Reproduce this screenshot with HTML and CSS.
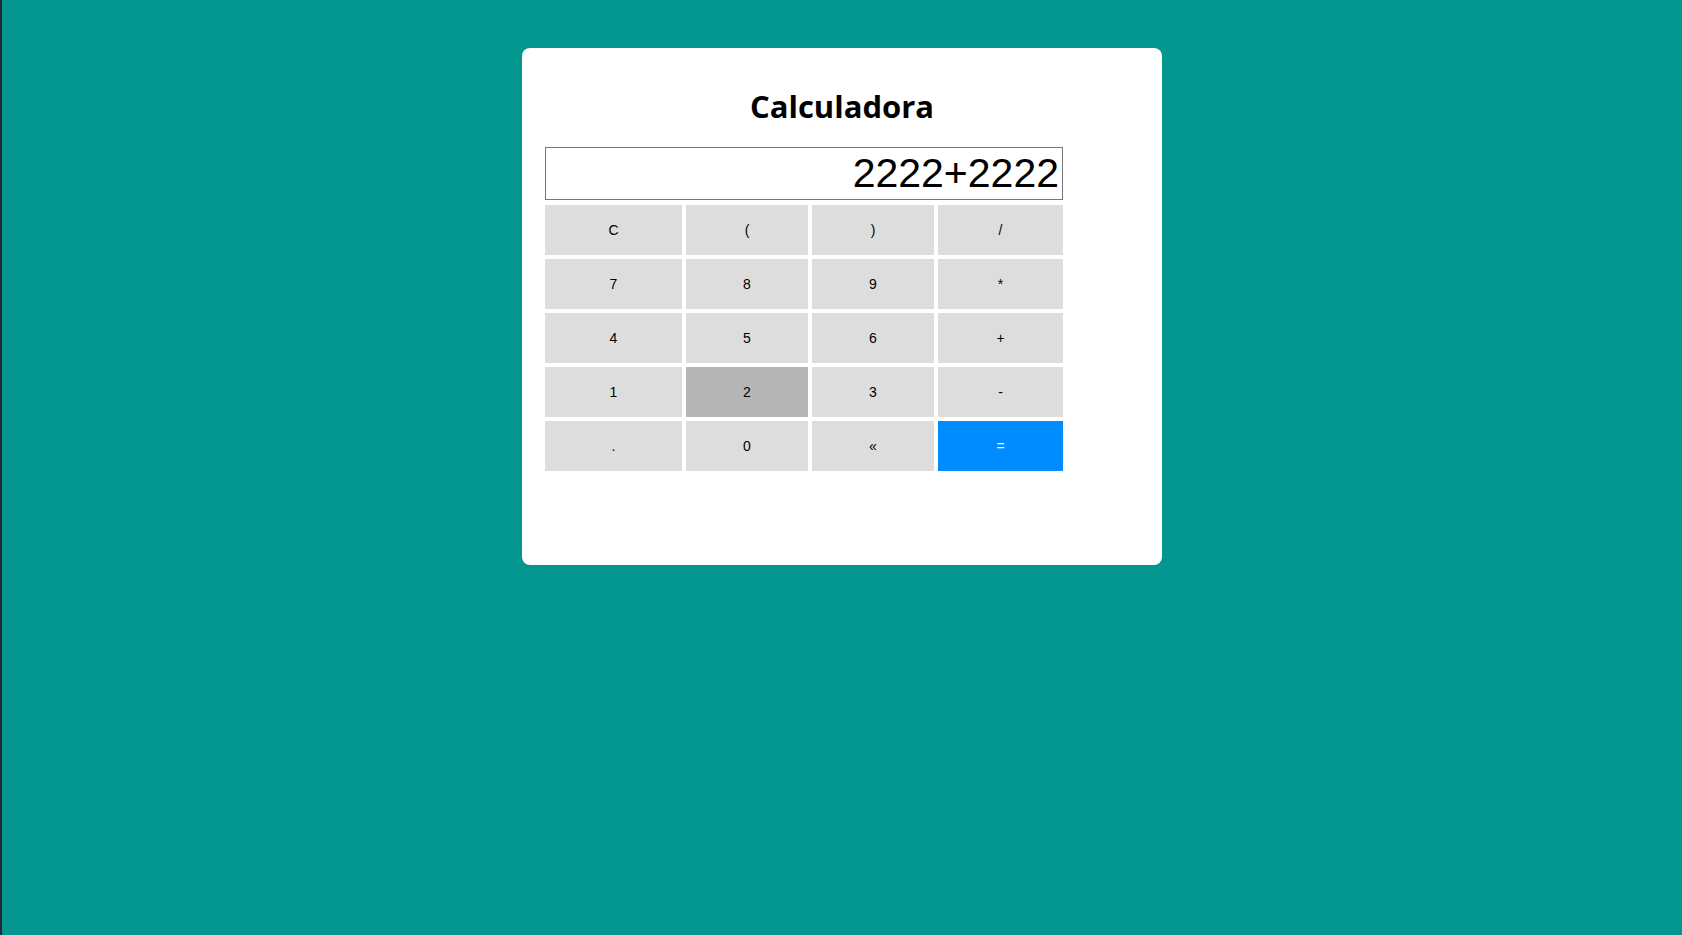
FILE: index.html
```html
<!DOCTYPE html>
<html lang="es">
<head>
<meta charset="utf-8">
<title>Calculadora</title>
<link rel="stylesheet" href="styles.css">
</head>
<body>
<div class="card">
  <h1 class="title">Calculadora</h1>
  <div class="calc">
    <input class="display" type="text" value="2222+2222" readonly>
    <div class="keys">
      <button class="key">C</button>
      <button class="key">(</button>
      <button class="key">)</button>
      <button class="key">/</button>
      <button class="key">7</button>
      <button class="key">8</button>
      <button class="key">9</button>
      <button class="key">*</button>
      <button class="key">4</button>
      <button class="key">5</button>
      <button class="key">6</button>
      <button class="key">+</button>
      <button class="key">1</button>
      <button class="key key-hover">2</button>
      <button class="key">3</button>
      <button class="key">-</button>
      <button class="key">.</button>
      <button class="key">0</button>
      <button class="key">&laquo;</button>
      <button class="key key-equal">=</button>
    </div>
  </div>
</div>
</body>
</html>
```

FILE: styles.css
```css
html, body {
  margin: 0;
  padding: 0;
}
body {
  background: #03968f;
  min-height: 935px;
  box-sizing: border-box;
  border-left: 2px solid #1f2c37;
  padding-top: 48px;
  font-family: "Open Sans", "Liberation Sans", sans-serif;
}
.card {
  width: 640px;
  height: 517px;
  box-sizing: border-box;
  margin: 0 auto;
  background: #ffffff;
  border-radius: 8px;
  padding: 39px 23px 0;
}
.title {
  margin: 0 0 21px;
  text-align: center;
  font-family: "Open Sans", sans-serif;
  font-weight: 700;
  font-size: 31px;
  line-height: 39px;
  color: #000;
}
.calc {
  width: 518px;
  display: flex;
  flex-direction: column;
  gap: 5px;
}
.display {
  box-sizing: border-box;
  width: 518px;
  height: 53px;
  border: 1px solid #767676;
  padding: 0 3px 0 4px;
  margin: 0;
  text-align: right;
  font-family: "Liberation Sans", Arial, sans-serif;
  font-size: 41px;
  color: #000;
  background: #fff;
  outline: none;
}
.keys {
  display: grid;
  grid-template-columns: 137px 122px 122px 125px;
  grid-auto-rows: 50px;
  gap: 4px;
}
.key {
  margin: 0;
  border: none;
  padding: 0;
  background: #dddddd;
  color: #000;
  font-family: "Liberation Sans", Arial, sans-serif;
  font-size: 14px;
  cursor: pointer;
}
.key-hover {
  background: #b5b5b5;
}
.key-equal {
  background: #008cff;
  color: #fff;
}
```
